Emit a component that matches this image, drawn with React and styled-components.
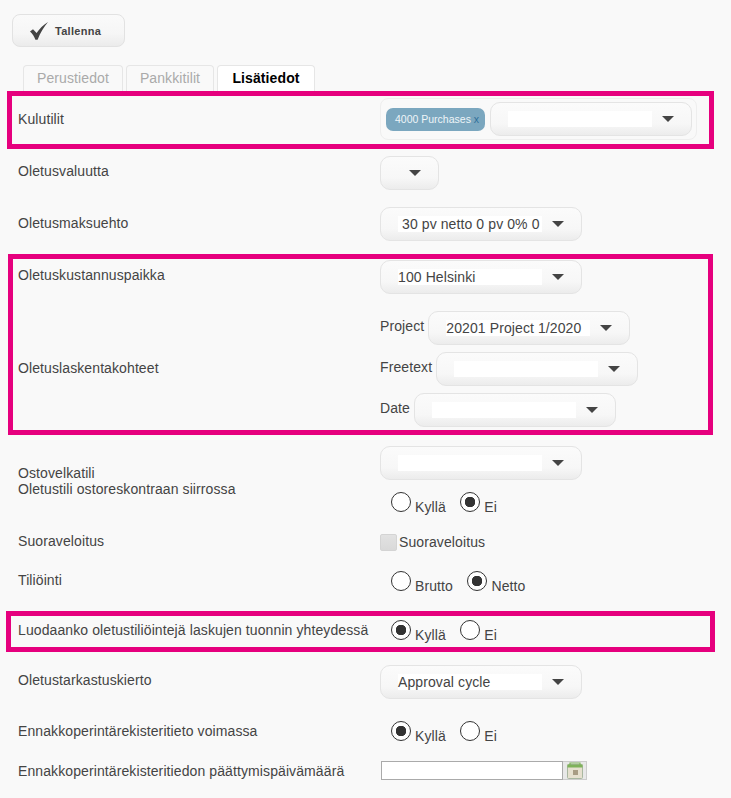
import React from 'react';
import styled, {createGlobalStyle} from 'styled-components';

const GlobalStyle = createGlobalStyle`
  html, body {
    margin: 0;
    padding: 0;
    background: #f9f9f9;
  }
  body {
    font-family: "Liberation Sans", Arial, sans-serif;
    font-size: 14px;
    letter-spacing: 0.1px;
    color: #444;
  }
`;

const CheckIcon = () => (
  <svg width="18" height="18" viewBox="0 0 18 18">
    <path d="M0 9.5 L3 7.2 L6.6 11 C9.5 6.8 13 3 18 0 C13.8 5 10.2 10.8 7.6 17.8 L5.4 17.8 C4.4 14.6 2.4 11.8 0 9.5 Z" fill="#444" />
  </svg>
);

const CalendarIcon = () => (
  <svg width="16" height="17" viewBox="0 0 16 17">
    <rect x="0.5" y="2.5" width="15" height="14" rx="1" fill="#e6e0cf" stroke="#a9b7a0" />
    <rect x="0.5" y="2.5" width="15" height="3" fill="#7fb25a" />
    <path d="M3 3 V1 H13 V3" fill="none" stroke="#7fb25a" strokeWidth="1.2" />
    <rect x="6" y="8" width="5" height="5" fill="#a89c84" />
  </svg>
);

const SelectBox = ({width = 202, value, indent = 0, blank}) => (
  <Select $width={width} $blank={blank}>
    {!blank && <Value $indent={indent}>{value}</Value>}
    <Arrow />
  </Select>
);

const RadioGroup = ({options, checked}) => (
  <Radios>
    {options.map(option => (
      <Option key={option}>
        <Radio $checked={option === checked} />
        <span>{option}</span>
      </Option>
    ))}
  </Radios>
);

const App = () => (
  <Page>
    <GlobalStyle />
    <SaveButton>
      <CheckIcon />
      <span>Tallenna</span>
    </SaveButton>
    <Tabs>
      <Tab $width={100}>Perustiedot</Tab>
      <Tab $width={88}>Pankkitilit</Tab>
      <Tab $width={98} $active>Lisätiedot</Tab>
    </Tabs>

    <Frame $top={-1} $shift={2} $width={707}>
      <Row $center $height={48}>
        <Label>Kulutilit</Label>
        <TagBox>
          <Chip>4000 Purchases <ChipClose>x</ChipClose></Chip>
          <SelectBox value="" />
        </TagBox>
      </Row>
    </Frame>

    <Row $top={7} $plain $center>
      <Label $lift={2}>Oletusvaluutta</Label>
      <SelectBox width={59} blank />
    </Row>
    <Row $top={17} $plain $center>
      <Label>Oletusmaksuehto</Label>
      <SelectBox value="30 pv netto 0 pv 0% 0" indent={4} />
    </Row>

    <Frame $top={13} $shift={1} $width={705} $pad="1px 0 3px">
      <Row $center>
        <Label $lift={2}>Oletuskustannuspaikka</Label>
        <SelectBox value="100 Helsinki" />
      </Row>
      <Row $top={17} $center>
        <Label>Oletuslaskentakohteet</Label>
        <Stack>
          <Dimension><DimensionName>Project</DimensionName><SelectBox value="20201 Project 1/2020" /></Dimension>
          <Dimension><DimensionName>Freetext</DimensionName><SelectBox value="" /></Dimension>
          <Dimension><DimensionName>Date</DimensionName><SelectBox value="" /></Dimension>
        </Stack>
      </Row>
    </Frame>

    <Row $top={11} $plain $center>
      <Label $lift={0}>Ostovelkatili<br />Oletustili ostoreskontraan siirrossa</Label>
      <Stack $gap={12}>
        <SelectBox value="" />
        <RadioGroup options={['Kyllä', 'Ei']} checked="Ei" />
      </Stack>
    </Row>
    <Row $top={18} $plain $center>
      <Label>Suoraveloitus</Label>
      <CheckField><Checkbox />Suoraveloitus</CheckField>
    </Row>
    <Row $top={20} $plain $center>
      <Label $lift={3}>Tiliöinti</Label>
      <RadioGroup options={['Brutto', 'Netto']} checked="Netto" />
    </Row>

    <Frame $top={17} $shift={3} $width={709}>
      <Row $center $height={31}>
        <Label $lift={2}>Luodaanko oletustiliöintejä laskujen tuonnin yhteydessä</Label>
        <RadioGroup options={['Kyllä', 'Ei']} checked="Kyllä" />
      </Row>
    </Frame>

    <Row $top={13} $plain $center>
      <Label $lift={2}>Oletustarkastuskierto</Label>
      <SelectBox value="Approval cycle" />
    </Row>
    <Row $top={22} $plain $center>
      <Label $lift={2}>Ennakkoperintärekisteritieto voimassa</Label>
      <RadioGroup options={['Kyllä', 'Ei']} checked="Kyllä" />
    </Row>
    <Row $top={17} $plain $center>
      <Label $lift={0}>Ennakkoperintärekisteritiedon päättymispäivämäärä</Label>
      <DateField>
        <DateInput />
        <DateButton><CalendarIcon /></DateButton>
      </DateField>
    </Row>
  </Page>
);

const Page = styled.div`
  box-sizing: border-box;
  width: 731px;
  height: 798px;
  overflow: hidden;
  padding: 14px 0 0 9px;
  background: #f9f9f9;
  display: flex;
  flex-direction: column;
  align-items: flex-start;
`;

const SaveButton = styled.button`
  box-sizing: border-box;
  width: 113px;
  height: 33px;
  margin-left: 3px;
  padding: 0 0 0 17px;
  display: flex;
  align-items: center;
  gap: 7px;
  border: 1px solid #e2e2e2;
  border-radius: 8px;
  background: linear-gradient(#fafafa, #f6f6f6 60%, #ebebeb);
  font: bold 11px "Liberation Sans", Arial, sans-serif;
  letter-spacing: 0.3px;
  color: #444;
`;

const Tabs = styled.div`
  display: flex;
  gap: 3px;
  margin: 18px 0 0 14px;
`;

const Tab = styled.div`
  box-sizing: border-box;
  width: ${p => p.$width}px;
  height: 27px;
  border: 1px solid #e6e6e6;
  border-bottom: 0;
  border-radius: 4px 4px 0 0;
  background: ${p => (p.$active ? '#fff' : '#f9f9f9')};
  color: ${p => (p.$active ? '#000' : '#aaa')};
  font-size: 14px;
  font-weight: ${p => (p.$active ? 'bold' : 'normal')};
  text-align: center;
  line-height: 25px;
`;

const Frame = styled.section`
  box-sizing: border-box;
  width: ${p => p.$width}px;
  margin: ${p => p.$top}px 0 0 ${p => -p.$shift}px;
  padding: ${p => p.$pad || 0};
  padding-left: ${p => 4 + p.$shift}px;
  border: 5px solid #e6007e;
`;

const Row = styled.div`
  display: grid;
  grid-template-columns: 362px auto;
  justify-content: start;
  align-items: ${p => (p.$center ? 'center' : 'start')};
  margin-top: ${p => p.$top || 0}px;
  padding-left: ${p => (p.$plain ? 9 : 0)}px;
  min-height: ${p => p.$height || 0}px;
`;

const Label = styled.div`
  font-size: 14px;
  line-height: 16px;
  color: #444;
  margin-bottom: ${p => (p.$lift ?? 1) * 2}px;
`;

const TagBox = styled.div`
  box-sizing: border-box;
  width: 317px;
  height: 42px;
  margin-bottom: 2px;
  padding: 0 4px 0 5px;
  display: flex;
  align-items: center;
  gap: 5px;
  border: 1px solid #eeeeee;
  border-radius: 8px;
`;

const Chip = styled.div`
  box-sizing: border-box;
  width: 99px;
  height: 23px;
  padding-left: 9px;
  border-radius: 7px;
  background: #7ba7bf;
  color: #eef5f8;
  font-size: 10.5px;
  letter-spacing: 0;
  line-height: 23px;
  white-space: nowrap;
`;

const ChipClose = styled.span`
  color: #2f6f9a;
`;

const Select = styled.div`
  box-sizing: border-box;
  flex: none;
  width: ${p => p.$width}px;
  height: 34px;
  padding-left: ${p => (p.$blank ? 28 : 17)}px;
  display: flex;
  align-items: center;
  border: 1px solid #e4e4e4;
  border-radius: 10px;
  background: linear-gradient(#fbfbfb, #f7f7f7 65%, #ececec);
`;

const Value = styled.span`
  box-sizing: border-box;
  width: 144px;
  height: 16px;
  margin-right: 10px;
  padding-left: ${p => p.$indent}px;
  background: #fff;
  color: #444;
  font-size: 14px;
  line-height: 16px;
  white-space: nowrap;
`;

const Arrow = styled.i`
  width: 0;
  height: 0;
  border-style: solid;
  border-width: 6px 6px 0;
  border-color: #444 transparent transparent;
`;

const Stack = styled.div`
  display: flex;
  flex-direction: column;
  align-items: flex-start;
  gap: ${p => p.$gap || 7}px;
`;

const Dimension = styled.div`
  display: flex;
  gap: 4px;
`;

const DimensionName = styled.span`
  line-height: 30px;
`;

const Radios = styled.div`
  display: flex;
  gap: 14.5px;
  padding-left: 11px;
`;

const Option = styled.label`
  display: flex;
  align-items: flex-end;
  gap: 4px;
  height: 23px;
  line-height: 16px;
`;

const Radio = styled.span`
  box-sizing: border-box;
  width: 20px;
  height: 20px;
  margin-bottom: 3px;
  border: 1.5px solid #333;
  border-radius: 50%;
  background: ${p => (p.$checked
    ? 'radial-gradient(circle, #333 0 5px, #fff 5.5px)'
    : '#fff')};
`;

const CheckField = styled.div`
  display: flex;
  align-items: center;
  gap: 2px;
  height: 17px;
  line-height: 16px;
`;

const Checkbox = styled.span`
  box-sizing: border-box;
  width: 17px;
  height: 17px;
  border: 1px solid #d4d4d4;
  border-radius: 2px;
  background: linear-gradient(#e2e2e2, #d9d9d9);
`;

const DateField = styled.div`
  display: flex;
  height: 19px;
  margin-left: 1px;
`;

const DateInput = styled.div`
  box-sizing: border-box;
  width: 182px;
  height: 19px;
  border: 1px solid #aaa;
  background: #fff;
`;

const DateButton = styled.div`
  box-sizing: border-box;
  width: 24px;
  height: 19px;
  display: flex;
  align-items: center;
  justify-content: center;
  border: 1px solid #ccc;
  border-left: 0;
  background: #e8e8e8;
`;

export default App;
